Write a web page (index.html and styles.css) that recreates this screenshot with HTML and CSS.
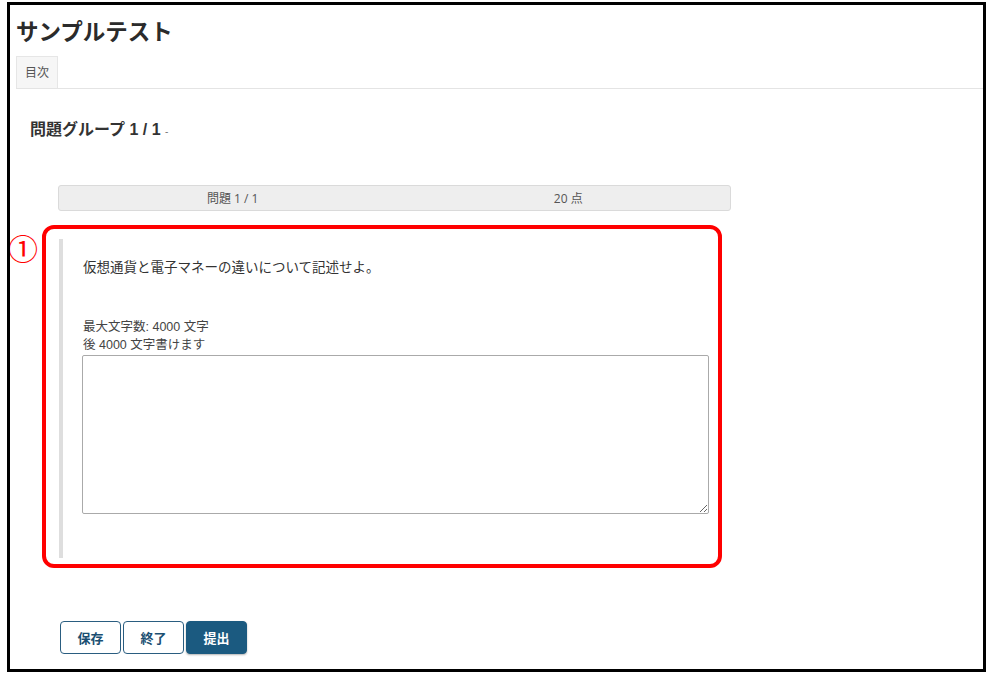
FILE: index.html
```html
<!DOCTYPE html>
<html lang="ja">
<head>
<meta charset="utf-8">
<title>サンプルテスト</title>
<link rel="stylesheet" href="styles.css">
</head>
<body>
<div class="frame">
  <h1 class="title">サンプルテスト</h1>
  <div class="tabs">
    <div class="tab">目次</div>
  </div>
  <h2 class="group">問題グループ 1 / 1 <span class="dash">-</span></h2>
  <div class="qbar">
    <div class="qbar-num">問題 1 / 1</div>
    <div class="qbar-pts">20 点</div>
  </div>
  <div class="mark-wrap">
    <span class="mark">①</span>
    <div class="mark-box">
      <div class="question">
        <p class="qtext">仮想通貨と電子マネーの違いについて記述せよ。</p>
        <div class="limits">
          <div>最大文字数: 4000 文字</div>
          <div>後 4000 文字書けます</div>
        </div>
        <textarea class="answer"></textarea>
      </div>
    </div>
  </div>
  <div class="buttons">
    <button class="btn btn-outline">保存</button>
    <button class="btn btn-outline">終了</button>
    <button class="btn btn-primary">提出</button>
  </div>
</div>
</body>
</html>
```

FILE: styles.css
```css
* { box-sizing: border-box; }
html, body { margin: 0; padding: 0; background: #fff; }
body {
  font-family: "Liberation Sans", "Noto Sans CJK JP", sans-serif;
  color: #333;
}
.frame {
  margin: 2px 0 0 7px;
  width: 979px;
  height: 670px;
  border: 3px solid #000;
  position: relative;
  overflow: hidden;
}
.title {
  margin: 13px 0 0 6px;
  font-size: 22.5px;
  line-height: 30px;
  font-weight: bold;
  color: #2b2b2b;
}
.tabs {
  margin: 8px 0 0 6px;
  display: flex;
  border-bottom: 1px solid #e4e4e4;
}
.tab {
  height: 32px;
  line-height: 32px;
  padding: 0 8px;
  font-size: 12px;
  color: #555;
  background: #f6f6f6;
  border: 1px solid #e6e6e6;
  border-bottom: none;
}
.group {
  margin: 31px 0 0 20px;
  font-size: 16px;
  line-height: 20px;
  font-weight: bold;
  color: #333;
}
.dash { font-weight: normal; font-size: 10px; color: #777; }
.qbar {
  margin: 43px 0 0 48px;
  width: 673px;
  height: 26px;
  display: flex;
  align-items: center;
  background: #eee;
  border: 1px solid #dadada;
  border-radius: 3px;
  font-size: 12px;
  color: #555;
  font-family: "Open Sans", "Noto Sans CJK JP", sans-serif;
}
.qbar-num { width: 50%; text-align: center; padding-left: 12px; }
.qbar-pts { width: 50%; text-align: center; padding-left: 12px; }
.mark-wrap {
  position: relative;
  margin: 14px 0 0 32px;
  width: 680px;
}
.mark {
  position: absolute;
  left: -34px;
  top: 6px;
  font-family: "Noto Sans CJK JP", serif;
  font-size: 30px;
  line-height: 32px;
  font-weight: 400;
  color: #f00;
}
.mark-box {
  border: 4px solid #f00;
  border-radius: 12px;
  padding: 10px 8px 6px 13px;
}
.question {
  border-left: 4px solid #dedede;
  padding: 19px 0 0 20px;
  height: 319px;
}
.qtext {
  margin: 0;
  font-size: 13.5px;
  line-height: 20px;
  color: #333;
}
.limits {
  margin-top: 40px;
  font-size: 12.5px;
  line-height: 18px;
  color: #444;
}
.answer {
  display: block;
  margin: 1px 0 0 -1px;
  width: 627px;
  height: 159px;
  border: 1px solid #aaa;
  border-radius: 2px;
  resize: both;
  font: inherit;
}
.buttons {
  margin: 53px 0 0 50px;
  display: flex;
  gap: 2px;
}
.btn {
  height: 33px;
  width: 61px;
  border-radius: 4px;
  font-family: "Noto Sans CJK JP", sans-serif;
  font-size: 13px;
  font-weight: bold;
  cursor: pointer;
}
.btn-outline {
  background: #fff;
  color: #1b4f72;
  border: 1px solid #2a5d80;
}
.btn-primary {
  background: #1b5a80;
  color: #fff;
  border: 1px solid #1b5a80;
  box-shadow: 0 1px 2px rgba(0,0,0,0.3);
}
```
